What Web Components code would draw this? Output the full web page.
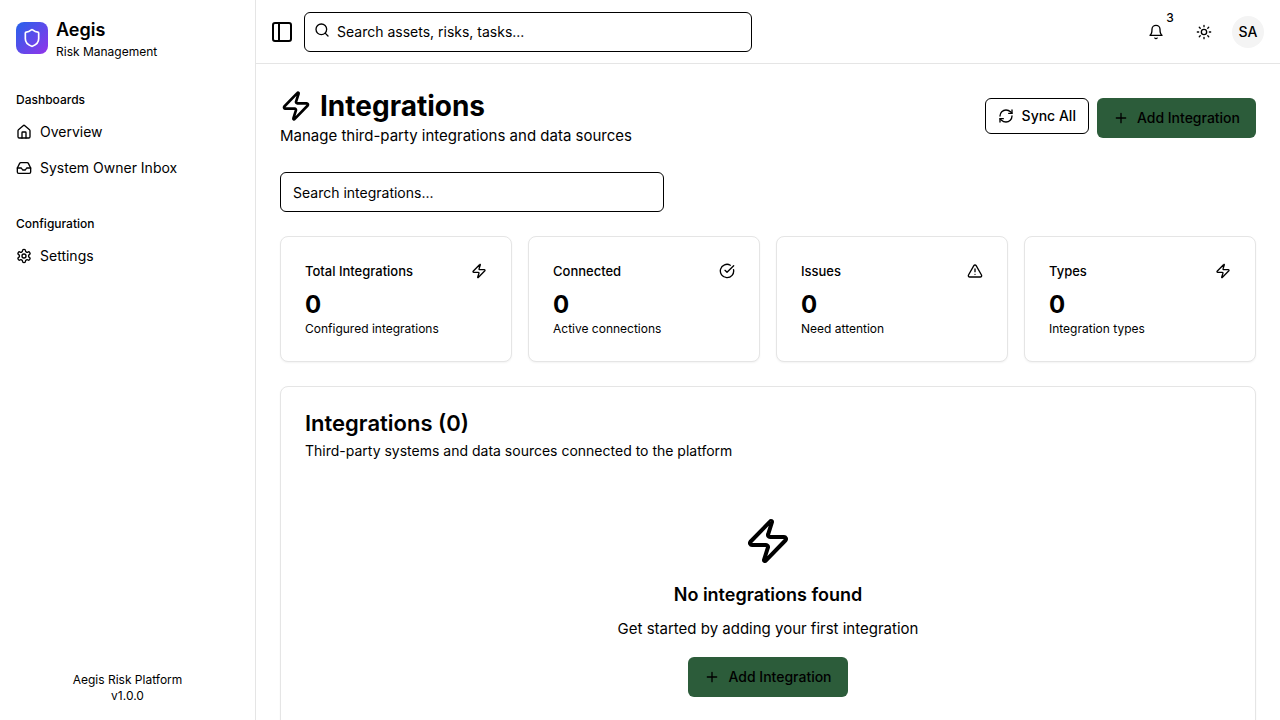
<!DOCTYPE html>
<html lang="en">
<head>
<meta charset="utf-8">
<meta name="viewport" content="width=device-width, initial-scale=1">
<title>Aegis – Integrations</title>
<style>
  html { scrollbar-width: none; }
  body {
    margin: 0;
    font-family: Inter, "Liberation Sans", sans-serif;
    font-size: 14px;
    line-height: 20px;
    color: #000;
    background: #fff;
    --line: #e5e5e5;
    --accent: #2c5c3a;
  }
</style>
</head>
<body>
<aegis-app></aegis-app>

<script>
const ICONS = {
  shield: '<path d="M20 13c0 5-3.500 7.500-7.660 8.950a1 1 0 0 1-.67-.01C7.500 20.500 4 18 4 13V6a1 1 0 0 1 1-1c2 0 4.500-1.200 6.240-2.720a1.170 1.170 0 0 1 1.520 0C14.510 3.810 17 5 19 5a1 1 0 0 1 1 1z"/>',
  house: '<path d="M15 21v-8a1 1 0 0 0-1-1h-4a1 1 0 0 0-1 1v8"/><path d="M3 10a2 2 0 0 1 .709-1.528l7-5.999a2 2 0 0 1 2.582 0l7 5.999A2 2 0 0 1 21 10v9a2 2 0 0 1-2 2H5a2 2 0 0 1-2-2z"/>',
  inbox: '<path d="M22 12h-6l-2 3h-4l-2-3H2"/><path d="M5.450 5.110 2 12v6a2 2 0 0 0 2 2h16a2 2 0 0 0 2-2v-6l-3.450-6.890A2 2 0 0 0 16.760 4H7.240a2 2 0 0 0-1.790 1.110z"/>',
  settings: '<path d="M12.220 2h-.44a2 2 0 0 0-2 2v.18a2 2 0 0 1-1 1.730l-.43.25a2 2 0 0 1-2 0l-.15-.08a2 2 0 0 0-2.730.730l-.22.380a2 2 0 0 0 .730 2.730l.15.1a2 2 0 0 1 1 1.720v.510a2 2 0 0 1-1 1.740l-.15.090a2 2 0 0 0-.730 2.730l.22.380a2 2 0 0 0 2.730.730l.15-.08a2 2 0 0 1 2 0l.43.250a2 2 0 0 1 1 1.730V20a2 2 0 0 0 2 2h.44a2 2 0 0 0 2-2v-.18a2 2 0 0 1 1-1.730l.43-.25a2 2 0 0 1 2 0l.15.080a2 2 0 0 0 2.730-.730l.22-.390a2 2 0 0 0-.730-2.730l-.15-.08a2 2 0 0 1-1-1.740v-.5a2 2 0 0 1 1-1.740l.15-.09a2 2 0 0 0 .730-2.730l-.22-.380a2 2 0 0 0-2.730-.730l-.15.080a2 2 0 0 1-2 0l-.43-.25a2 2 0 0 1-1-1.730V4a2 2 0 0 0-2-2z"/><circle cx="12" cy="12" r="3"/>',
  panel: '<rect width="18" height="18" x="3" y="3" rx="2"/><path d="M9 3v18"/>',
  search: '<circle cx="11" cy="11" r="8"/><path d="m21 21-4.300-4.300"/>',
  bell: '<path d="M10.268 21a2 2 0 0 0 3.464 0"/><path d="M6 8a6 6 0 0 1 12 0c0 7 3 9 3 9H3s3-2 3-9"/>',
  sun: '<circle cx="12" cy="12" r="4"/><path d="M12 2v2M12 20v2M4.930 4.930l1.410 1.410M17.660 17.660l1.410 1.410M2 12h2M20 12h2M6.340 17.660l-1.410 1.410M19.070 4.930l-1.410 1.410"/>',
  zap: '<path d="M4 14a1 1 0 0 1-.78-1.630l9.900-10.200a.5.5 0 0 1 .86.460l-1.920 6.020A1 1 0 0 0 13 10h7a1 1 0 0 1 .78 1.630l-9.900 10.200a.5.5 0 0 1-.86-.460l1.920-6.020A1 1 0 0 0 11 14z"/>',
  refresh: '<path d="M3 12a9 9 0 0 1 9-9 9.750 9.750 0 0 1 6.740 2.740L21 8"/><path d="M21 3v5h-5"/><path d="M21 12a9 9 0 0 1-9 9 9.750 9.750 0 0 1-6.740-2.740L3 16"/><path d="M8 16H3v5"/>',
  plus: '<path d="M5 12h14M12 5v14"/>',
  check: '<path d="M21.801 10A10 10 0 1 1 17 3.335"/><path d="m9 11 3 3L22 4"/>',
  alert: '<path d="m21.730 18-8-14a2 2 0 0 0-3.480 0l-8 14A2 2 0 0 0 4 21h16a2 2 0 0 0 1.730-3"/><path d="M12 9v4M12 17h.01"/>'
};

/* Registers a custom element whose open shadow root holds the given markup. */
function define(name, render) {
  customElements.define(name, class extends HTMLElement {
    constructor() { super(); this.attachShadow({ mode: 'open' }); }
    connectedCallback() {
      const t = document.createElement('template');
      t.innerHTML = '<style>*{box-sizing:border-box}:host{box-sizing:border-box}</style>' + render(this);
      this.shadowRoot.replaceChildren(t.content.cloneNode(true));
    }
  });
}

define('ui-icon', el => `
  <style>
    :host { display: inline-flex; flex: none; width: var(--icon-size, 16px); height: var(--icon-size, 16px); }
    svg { width: 100%; height: 100%; fill: none; stroke: currentColor; stroke-width: 2; stroke-linecap: round; stroke-linejoin: round; }
  </style>
  <svg viewBox="0 0 24 24" aria-hidden="true">${ICONS[el.getAttribute('name')]}</svg>`);

define('ui-button', el => `
  <style>
    :host { display: inline-flex; flex: none; }
    button {
      display: inline-flex; align-items: center; gap: 8px; height: 40px; padding: 0 16px;
      border: 0; border-radius: 6px; background: var(--accent); color: inherit;
      font: inherit; font-weight: 500; white-space: nowrap; cursor: pointer;
    }
    :host([variant="outline"]) button { height: 36px; padding: 0 12px; background: #fff; border: 1px solid #000; }
  </style>
  <button type="button"><ui-icon name="${el.getAttribute('icon')}"></ui-icon><slot></slot></button>`);

define('ui-icon-button', el => `
  <style>
    :host { display: flex; flex: none; position: relative; }
    button {
      display: flex; align-items: center; justify-content: center; width: var(--button-size, 40px); height: var(--button-size, 40px);
      padding: 0; border: 0; border-radius: 6px; background: none; color: inherit; cursor: pointer;
    }
    .badge { position: absolute; top: -4px; right: -4px; width: 20px; text-align: center; font-size: 12px; font-weight: 500; }
  </style>
  <button type="button" aria-label="${el.getAttribute('label')}"><ui-icon name="${el.getAttribute('icon')}"></ui-icon></button>
  ${el.hasAttribute('badge') ? `<span class="badge">${el.getAttribute('badge')}</span>` : ''}`);

define('ui-search', el => `
  <style>
    :host { display: block; position: relative; width: 100%; }
    ui-icon { position: absolute; top: 10px; left: 10px; }
    input {
      display: block; width: 100%; height: 40px; padding: 0 12px; border: 1px solid #000; border-radius: 6px;
      background: #fff; color: inherit; font: inherit;
    }
    :host([icon]) input { padding-left: 32px; }
    input::placeholder { color: inherit; opacity: 1; }
  </style>
  <input type="search" aria-label="${el.getAttribute('label')}" placeholder="${el.getAttribute('placeholder')}">
  ${el.hasAttribute('icon') ? '<ui-icon name="search"></ui-icon>' : ''}`);

define('nav-group', el => `
  <style>
    :host { display: block; padding: 8px 16px; }
    h2 { display: flex; align-items: center; height: 32px; margin: 0; font-size: 12px; line-height: 16px; font-weight: 500; }
    nav { display: grid; gap: 4px; }
  </style>
  <h2>${el.getAttribute('label')}</h2>
  <nav aria-label="${el.getAttribute('label')}"><slot></slot></nav>`);

define('nav-item', el => `
  <style>
    :host { display: block; }
    a { display: flex; align-items: center; gap: 8px; height: 32px; color: inherit; text-decoration: none; }
  </style>
  <a href="#"><ui-icon name="${el.getAttribute('icon')}"></ui-icon><slot></slot></a>`);

define('app-sidebar', () => `
  <style>
    :host { display: flex; flex-direction: column; position: sticky; top: 0; height: 100vh; background: #fff; border-right: 1px solid var(--line); }
    header { display: flex; align-items: center; gap: 8px; padding: 16px; }
    .logo {
      display: flex; align-items: center; justify-content: center; width: 32px; height: 32px; border-radius: 8px;
      color: #fff; background: linear-gradient(to bottom right, #2563eb, #9333ea); --icon-size: 20px;
    }
    .brand { display: grid; }
    .brand strong { font-size: 18px; line-height: 28px; font-weight: 600; }
    .brand span, footer { font-size: 12px; line-height: 16px; }
    .groups { display: grid; gap: 8px; align-content: start; flex: 1; }
    footer { padding: 16px; text-align: center; }
    p { margin: 0; }
  </style>
  <header>
    <div class="logo"><ui-icon name="shield"></ui-icon></div>
    <div class="brand"><strong>Aegis</strong><span>Risk Management</span></div>
  </header>
  <div class="groups">
    <nav-group label="Dashboards">
      <nav-item icon="house">Overview</nav-item>
      <nav-item icon="inbox">System Owner Inbox</nav-item>
    </nav-group>
    <nav-group label="Configuration">
      <nav-item icon="settings">Settings</nav-item>
    </nav-group>
  </div>
  <footer><p>Aegis Risk Platform</p><p>v1.0.0</p></footer>`);

define('app-topbar', () => `
  <style>
    :host { display: flex; align-items: center; gap: 8px; height: 64px; padding: 0 16px 0 12px; background: #fff; border-bottom: 1px solid var(--line); }
    .toggle { --button-size: 28px; --icon-size: 24px; }
    ui-search { max-width: 448px; }
    .actions { display: flex; align-items: center; gap: 8px; margin-left: auto; }
    .avatar { width: 32px; height: 32px; padding: 0; border: 0; border-radius: 50%; background: #f4f4f4; color: inherit; font: inherit; font-weight: 500; cursor: pointer; }
  </style>
  <ui-icon-button class="toggle" icon="panel" label="Toggle sidebar"></ui-icon-button>
  <ui-search icon label="Search" placeholder="Search assets, risks, tasks..."></ui-search>
  <div class="actions">
    <ui-icon-button icon="bell" label="Notifications" badge="3"></ui-icon-button>
    <ui-icon-button icon="sun" label="Toggle theme"></ui-icon-button>
    <button class="avatar" type="button">SA</button>
  </div>`);

define('page-heading', () => `
  <style>
    :host { display: flex; align-items: center; justify-content: space-between; gap: 16px; }
    h1 { display: flex; align-items: center; gap: 8px; margin: 0; font-size: 28px; line-height: 36px; font-weight: 700; --icon-size: 32px; }
    p { margin: 0; font-size: 15px; line-height: 24px; }
    .actions { display: flex; align-items: flex-start; gap: 8px; }
  </style>
  <div>
    <h1><ui-icon name="zap"></ui-icon>Integrations</h1>
    <p>Manage third-party integrations and data sources</p>
  </div>
  <div class="actions">
    <ui-button variant="outline" icon="refresh">Sync All</ui-button>
    <ui-button icon="plus">Add Integration</ui-button>
  </div>`);

define('ui-card', () => `
  <style>
    :host { display: block; padding: 24px; border: 1px solid var(--line); border-radius: 8px; background: #fff; box-shadow: 0 1px 2px rgb(0 0 0 / 5%); }
  </style>
  <slot></slot>`);

define('stat-card', el => `
  <style>
    :host { display: block; }
    header { display: flex; align-items: center; justify-content: space-between; padding-bottom: 8px; }
    h3, p { margin: 0; }
    h3 { font-size: 13px; line-height: 20px; font-weight: 500; }
    .value { font-size: 24px; line-height: 32px; font-weight: 700; }
    .note { font-size: 12px; line-height: 16px; }
  </style>
  <ui-card>
    <header><h3>${el.getAttribute('label')}</h3><ui-icon name="${el.getAttribute('icon')}"></ui-icon></header>
    <p class="value">${el.getAttribute('value')}</p>
    <p class="note"><slot></slot></p>
  </ui-card>`);

define('integration-list', () => `
  <style>
    :host { display: block; }
    h2, h3, p { margin: 0; }
    header { display: grid; gap: 6px; }
    h2 { font-size: 22px; line-height: 24px; font-weight: 600; }
    .empty { display: flex; flex-direction: column; align-items: center; padding: 32px 0; margin-top: 24px; text-align: center; }
    .empty > ui-icon { --icon-size: 48px; }
    h3 { margin: 16px 0 8px; font-size: 18px; line-height: 28px; font-weight: 600; }
    .empty p { margin-bottom: 16px; font-size: 15px; line-height: 24px; }
  </style>
  <ui-card>
    <header>
      <h2>Integrations (0)</h2>
      <p>Third-party systems and data sources connected to the platform</p>
    </header>
    <div class="empty">
      <ui-icon name="zap"></ui-icon>
      <h3>No integrations found</h3>
      <p>Get started by adding your first integration</p>
      <ui-button icon="plus">Add Integration</ui-button>
    </div>
  </ui-card>`);

define('aegis-app', () => `
  <style>
    :host { display: grid; grid-template-columns: 256px minmax(0, 1fr); align-items: start; min-height: 100vh; }
    main { display: grid; gap: 24px; padding: 24px; }
    .filter { max-width: 384px; }
    .stats { display: grid; grid-template-columns: repeat(auto-fit, minmax(200px, 1fr)); gap: 16px; }
  </style>
  <app-sidebar></app-sidebar>
  <div>
    <app-topbar></app-topbar>
    <main>
      <page-heading></page-heading>
      <ui-search class="filter" label="Search integrations" placeholder="Search integrations..."></ui-search>
      <section class="stats" aria-label="Summary">
        <stat-card label="Total Integrations" value="0" icon="zap">Configured integrations</stat-card>
        <stat-card label="Connected" value="0" icon="check">Active connections</stat-card>
        <stat-card label="Issues" value="0" icon="alert">Need attention</stat-card>
        <stat-card label="Types" value="0" icon="zap">Integration types</stat-card>
      </section>
      <integration-list></integration-list>
    </main>
  </div>`);
</script>
</body>
</html>
